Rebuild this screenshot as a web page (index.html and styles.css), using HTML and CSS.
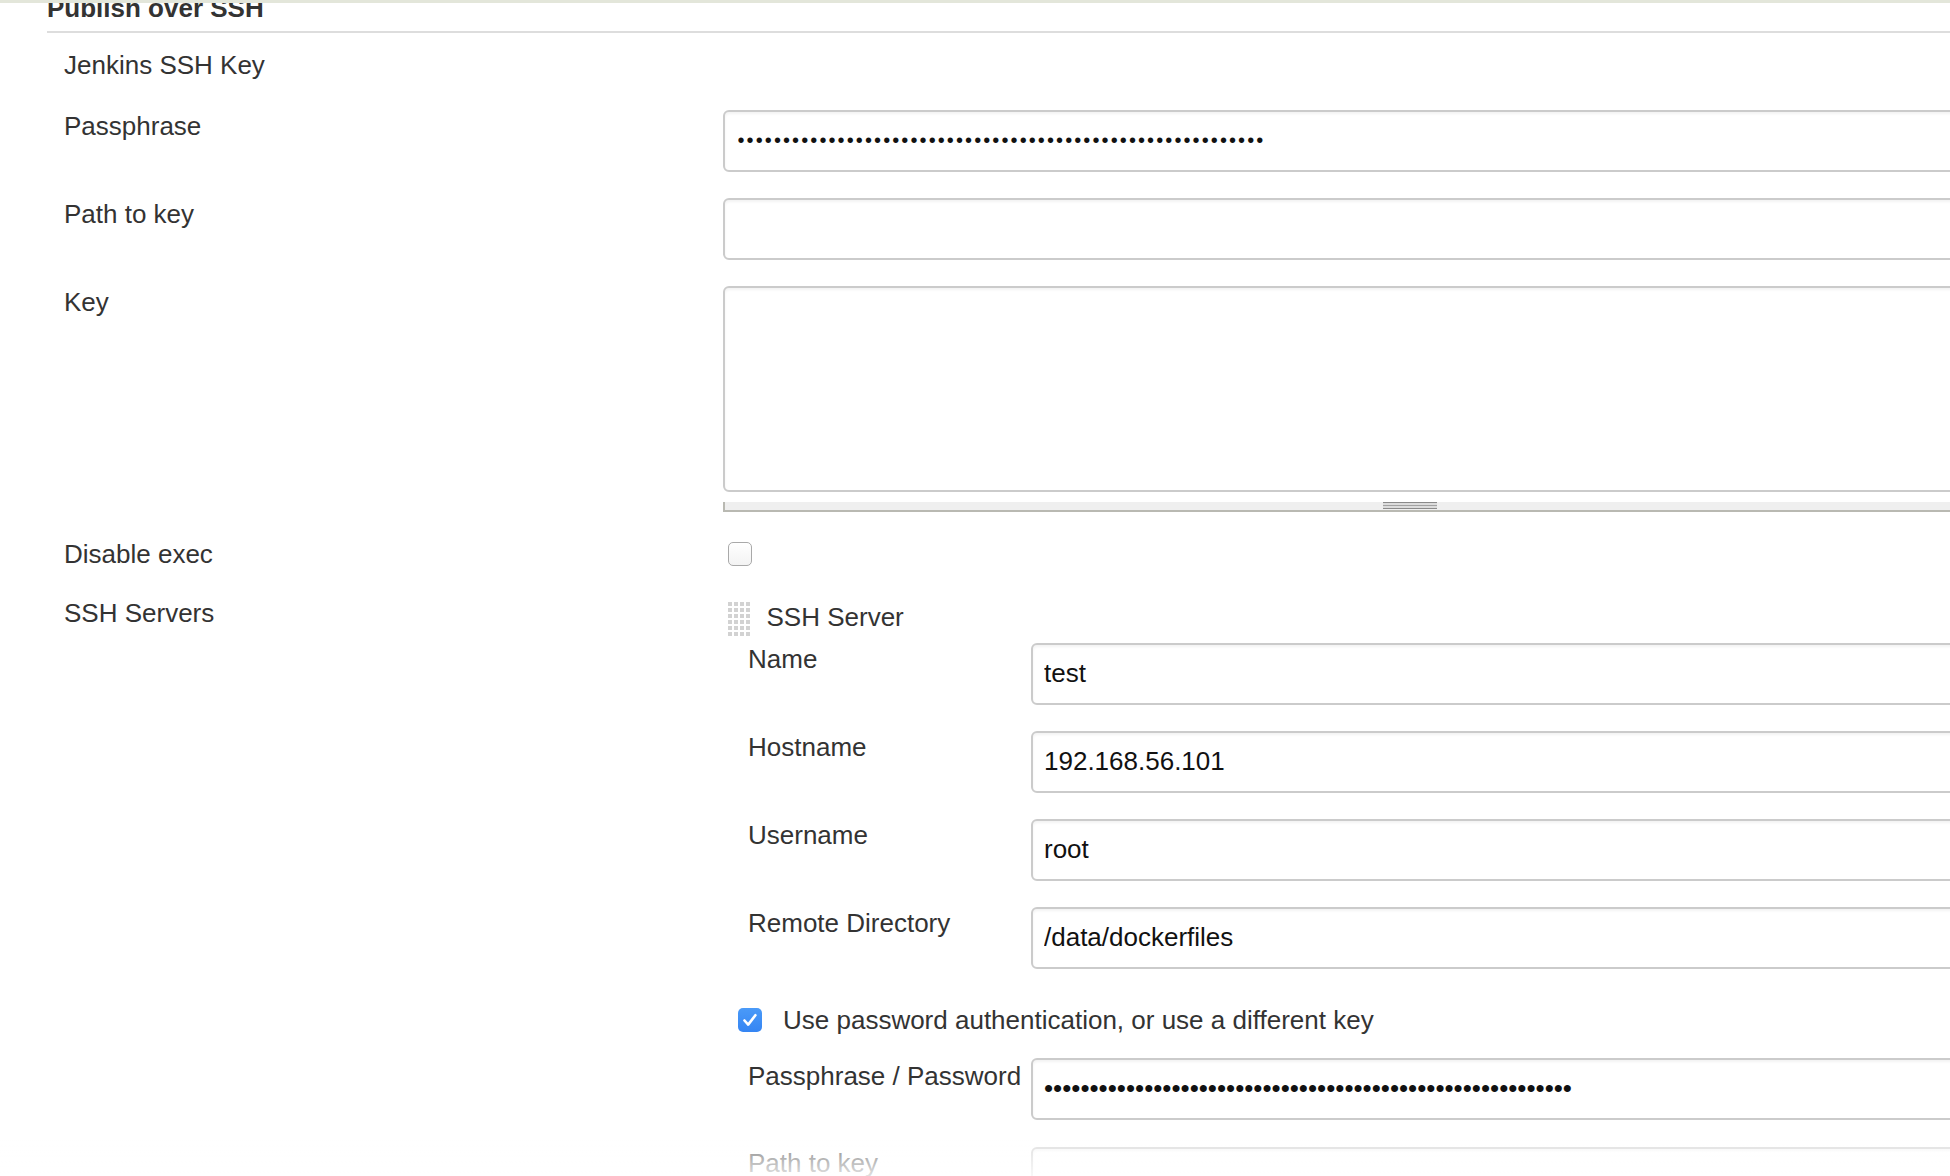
FILE: index.html
```html
<!DOCTYPE html>
<html lang="en">
<head>
  <meta charset="UTF-8">
  <meta name="viewport" content="width=device-width, initial-scale=1.0">
  <title>Publish over SSH</title>
  <link rel="stylesheet" href="styles.css">
</head>
<body>

<div class="topbar"></div>

<div class="section">
  <div class="section-head">
    <h3>Publish over SSH</h3>
  </div>

  <div class="form">
    <div class="row row-plain">
      <div class="label">Jenkins SSH Key</div>
    </div>

    <div class="row">
      <div class="label">Passphrase</div>
      <div class="field">
        <input class="input pass-small" type="password" value="xxxxxxxxxxxxxxxxxxxxxxxxxxxxxxxxxxxxxxxxxxxxxxxxxxxxxxxxxx">
      </div>
    </div>

    <div class="row">
      <div class="label">Path to key</div>
      <div class="field"><input class="input" type="text" value=""></div>
    </div>

    <div class="row">
      <div class="label">Key</div>
      <div class="field">
        <textarea class="input area"></textarea>
        <div class="resize"><div class="grip"></div></div>
      </div>
    </div>

    <div class="row row-check">
      <div class="label">Disable exec</div>
      <div class="field">
        <span class="check check-exec"></span>
      </div>
    </div>

    <div class="row row-servers">
      <div class="label">SSH Servers</div>
      <div class="field">
        <div class="server-head">
          <svg class="handle" width="23" height="34" viewBox="0 0 23 34">
            <g fill="#d2d2d2">
              <rect x="0" y="0" width="4" height="4"/><rect x="6" y="0" width="4" height="4"/><rect x="12" y="0" width="4" height="4"/><rect x="18" y="0" width="4" height="4"/>
              <rect x="0" y="6" width="4" height="4"/><rect x="6" y="6" width="4" height="4"/><rect x="12" y="6" width="4" height="4"/><rect x="18" y="6" width="4" height="4"/>
              <rect x="0" y="12" width="4" height="4"/><rect x="6" y="12" width="4" height="4"/><rect x="12" y="12" width="4" height="4"/><rect x="18" y="12" width="4" height="4"/>
              <rect x="0" y="18" width="4" height="4"/><rect x="6" y="18" width="4" height="4"/><rect x="12" y="18" width="4" height="4"/><rect x="18" y="18" width="4" height="4"/>
              <rect x="0" y="24" width="4" height="4"/><rect x="6" y="24" width="4" height="4"/><rect x="12" y="24" width="4" height="4"/><rect x="18" y="24" width="4" height="4"/>
              <rect x="0" y="30" width="4" height="4"/><rect x="6" y="30" width="4" height="4"/><rect x="12" y="30" width="4" height="4"/><rect x="18" y="30" width="4" height="4"/>
            </g>
          </svg>
          <span class="server-title">SSH Server</span>
        </div>

        <div class="sub-row">
          <div class="sub-label">Name</div>
          <input class="input sub-input" type="text" value="test">
        </div>
        <div class="sub-row">
          <div class="sub-label">Hostname</div>
          <input class="input sub-input" type="text" value="192.168.56.101">
        </div>
        <div class="sub-row">
          <div class="sub-label">Username</div>
          <input class="input sub-input" type="text" value="root">
        </div>
        <div class="sub-row">
          <div class="sub-label">Remote Directory</div>
          <input class="input sub-input" type="text" value="/data/dockerfiles">
        </div>

        <div class="opt-row">
          <span class="check checked">
            <svg width="24" height="24" viewBox="0 0 24 24"><path d="M6.5 12.5 L10.2 16.6 L17.4 7.2" fill="none" stroke="#fff" stroke-width="2.6" stroke-linecap="round" stroke-linejoin="round"/></svg>
          </span>
          <span class="opt-text">Use password authentication, or use a different key</span>
        </div>

        <div class="sub-row sub-pass">
          <div class="sub-label">Passphrase / Password</div>
          <input class="input sub-input" type="password" value="xxxxxxxxxxxxxxxxxxxxxxxxxxxxxxxxxxxxxxxxxxxxxxxxxxxxxxxxxx">
        </div>
        <div class="sub-row sub-path">
          <div class="sub-label">Path to key</div>
          <input class="input sub-input" type="text" value="">
        </div>
      </div>
    </div>
  </div>
</div>

<div class="fade"></div>

</body>
</html>
```

FILE: styles.css
```css
body {
  margin: 0;
  font-family: "Liberation Sans", Arial, sans-serif;
  font-size: 26px;
  color: #333;
  background: #fff;
  overflow: hidden;
}

.topbar {
  height: 3px;
  background: #e3e6da;
}

.section {
  padding-left: 47px;
}

.section-head {
  overflow: hidden;
}

.section-head h3 {
  margin: -11px 0 0;
  padding-bottom: 7px;
  font-size: 26px;
  line-height: 32px;
  font-weight: bold;
  color: #333;
  border-bottom: 2px solid #ddd;
}

.form {
  padding-left: 17px;
  margin-top: 15.7px;
}

.row {
  display: flex;
  align-items: flex-start;
}

.row + .row {
  margin-top: 26px;
}

.row-plain {
  min-height: 35px;
}

.label {
  flex: none;
  width: 658.5px;
  line-height: 32px;
}

.field {
  flex: none;
  width: 1373px;
}

.input {
  display: block;
  box-sizing: border-box;
  width: 100%;
  height: 62px;
  margin: 0;
  padding: 0 10px 0 11px;
  font-family: "Liberation Sans", Arial, sans-serif;
  font-size: 26px;
  color: #111;
  background: #fff;
  border: 2px solid #cbcbcb;
  border-radius: 6px;
  box-shadow: inset 0 2px 3px rgba(0, 0, 0, 0.05);
  outline: none;
}

.pass-small {
  font-size: 20px;
  letter-spacing: 2.1px;
  padding-left: 13px;
}

.area {
  height: 206px;
  resize: none;
}

.resize {
  margin-top: 10px;
  height: 8px;
  background: #efefef;
  border-left: 2px solid #b9b9b2;
  border-bottom: 2px solid #b9b9b2;
}

.grip {
  width: 54px;
  height: 7px;
  margin: 2px auto 0;
  background: linear-gradient(#8a8a8a 0 1px, #dcdcdc 1px 3px, #a2a2a2 3px 4px, #dcdcdc 4px 6px, #8a8a8a 6px 7px);
}

.row-servers {
  margin-top: 27.3px !important;
}

.check {
  display: block;
  box-sizing: border-box;
  width: 24px;
  height: 24px;
  border: 1px solid #a9a9a9;
  border-radius: 5px;
  background: linear-gradient(#fff, #f3f3f3);
}

.check-exec {
  margin: 4.3px 0 0 5px;
}

.check.checked {
  border: none;
  background: linear-gradient(#4a9af8, #3585f3);
}

.check svg {
  display: block;
}

.server-head {
  display: flex;
  align-items: center;
  padding: 5px 0 0 5px;
  margin-bottom: 7px;
}

.handle {
  display: block;
  flex: none;
}

.server-title {
  margin-left: 16px;
  line-height: 32px;
  margin-top: -4px;
}

.sub-row {
  display: flex;
  align-items: flex-start;
  padding-left: 25.5px;
}

.sub-row + .sub-row {
  margin-top: 26px;
}

.sub-label {
  flex: none;
  width: 283px;
  line-height: 32px;
}

.sub-input {
  flex: none;
  width: 1064px;
}

.opt-row {
  display: flex;
  align-items: center;
  height: 32px;
  margin-top: 35px;
  padding-left: 15.5px;
}

.opt-text {
  margin-left: 21px;
  line-height: 32px;
}

.sub-pass {
  margin-top: 22px;
}

.sub-pass .sub-label {
  margin-top: 1.7px;
}

.sub-row.sub-path {
  margin-top: 26.6px;
}

.fade {
  position: fixed;
  left: 0;
  right: 0;
  bottom: 0;
  height: 36px;
  background: linear-gradient(rgba(255, 255, 255, 0.4), rgba(255, 255, 255, 0.85));
}
```
